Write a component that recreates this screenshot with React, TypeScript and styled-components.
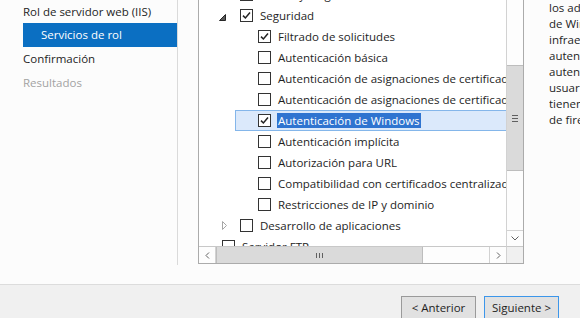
import React from 'react';
import styled, { createGlobalStyle } from 'styled-components';

const GlobalStyle = createGlobalStyle`
  html, body {
    margin: 0;
    padding: 0;
    background: #fcfcfc;
  }
  body {
    width: 580px;
    height: 318px;
    overflow: hidden;
    font-family: "Open Sans", "Noto Sans", sans-serif;
    font-size: 11.5px;
    color: #1e1e1e;
  }
`;

const Window = styled.div`
  width: 580px;
  height: 318px;
  display: flex;
  flex-direction: column;
  overflow: hidden;
  background: #fcfcfc;
`;

const Main = styled.div`
  display: flex;
  align-items: flex-start;
  height: 284px;
  overflow: hidden;
`;

const Nav = styled.nav`
  width: 178px;
  height: 265px;
  box-sizing: border-box;
  border-right: 1px solid #dadada;
  flex-shrink: 0;
  display: flex;
  flex-direction: column;
  padding-top: 1px;
`;

const NavItem = styled.div<{ $selected?: boolean; $disabled?: boolean; $first?: boolean }>`
  height: ${p => (p.$first ? 22 : 24)}px;
  line-height: ${p => (p.$first ? 22 : 24)}px;
  white-space: nowrap;
  margin-left: 23px;
  padding-left: ${p => (p.$selected ? 18 : 0)}px;
  background: ${p => (p.$selected ? '#0b6fc2' : 'transparent')};
  color: ${p => (p.$selected ? '#ffffff' : p.$disabled ? '#a3a3a3' : '#1e1e1e')};
`;

const Panel = styled.div`
  margin-left: 20px;
  width: 326px;
  height: 264px;
  box-sizing: border-box;
  border: 1px solid #ababab;
  border-top: none;
  background: #ffffff;
  flex-shrink: 0;
  display: grid;
  grid-template-columns: 307px 17px;
  grid-template-rows: 246px 17px;
`;

const Viewport = styled.div`
  overflow: hidden;
  position: relative;
`;

const TreeList = styled.div`
  margin-top: -16px;
  width: 420px;
  display: flex;
  flex-direction: column;
`;

const Row = styled.div<{ $level: number }>`
  height: 21px;
  display: flex;
  padding-left: ${p => p.$level * 18}px;
`;

const Item = styled.div<{ $selected?: boolean }>`
  flex: 1;
  height: 21px;
  box-sizing: border-box;
  display: flex;
  align-items: center;
  padding-left: 1px;
  border: 1px solid ${p => (p.$selected ? '#84b6ea' : 'transparent')};
  background: ${p => (p.$selected ? '#dbe9fb' : 'transparent')};
  white-space: nowrap;
`;

const Expander = styled.span`
  width: 21px;
  height: 19px;
  flex-shrink: 0;
  display: flex;
  align-items: flex-start;
`;

const ExpandedGlyph = styled.svg`
  margin-top: 8px;
  margin-left: 0;
`;

const CollapsedGlyph = styled.svg`
  margin-top: 5px;
  margin-left: 3px;
`;

const CheckBox = styled.span`
  width: 13px;
  height: 13px;
  box-sizing: border-box;
  border: 1px solid #333333;
  background: #ffffff;
  flex-shrink: 0;
  display: flex;
  align-items: center;
  justify-content: center;
`;

const Label = styled.span`
  margin-left: 7px;
  line-height: 19px;
  color: #1e1e1e;
`;

const Selection = styled.span`
  display: inline-block;
  line-height: 15px;
  padding: 0 1px;
  margin-left: -1px;
  background: #2f74d0;
  color: #ffffff;
`;

const VScroll = styled.div`
  box-sizing: border-box;
  border-left: 1px solid #d2d2d2;
  background: #fdfdfd;
  display: flex;
  flex-direction: column;
`;

const VThumb = styled.div`
  margin-top: 65px;
  height: 106px;
  box-sizing: border-box;
  border: 1px solid #bdbdbd;
  border-left: none;
  border-right: none;
  background: #dadada;
  display: flex;
  align-items: center;
  justify-content: center;
`;

const Track = styled.div`
  flex: 1;
`;

const ArrowButton = styled.div<{ $side: 'top' | 'left' | 'right' }>`
  box-sizing: border-box;
  display: flex;
  align-items: center;
  justify-content: center;
  flex-shrink: 0;
  width: ${p => (p.$side === 'top' ? 'auto' : '17px')};
  height: ${p => (p.$side === 'top' ? '16px' : 'auto')};
  border-top: ${p => (p.$side === 'top' ? '1px solid #d2d2d2' : 'none')};
  border-right: ${p => (p.$side === 'left' ? '1px solid #d2d2d2' : 'none')};
  border-left: ${p => (p.$side === 'right' ? '1px solid #d2d2d2' : 'none')};
`;

const HScroll = styled.div`
  box-sizing: border-box;
  border-top: 1px solid #c8c8c8;
  background: #fdfdfd;
  display: flex;
`;

const HThumb = styled.div`
  width: 207px;
  box-sizing: border-box;
  border: 1px solid #bdbdbd;
  border-top: none;
  border-bottom: none;
  background: #dadada;
  display: flex;
  align-items: center;
  justify-content: center;
`;

const Corner = styled.div`
  box-sizing: border-box;
  border-top: 1px solid #c8c8c8;
  border-left: 1px solid #d2d2d2;
  background: #f0f0f0;
`;

const Description = styled.div`
  margin-left: 25px;
  flex: 1;
  min-width: 0;
  overflow: hidden;
  white-space: nowrap;
  line-height: 16px;
  color: #1e1e1e;
`;

const Footer = styled.div`
  height: 34px;
  box-sizing: border-box;
  border-top: 1px solid #dcdcdc;
  background: #f0f0f0;
  display: flex;
  justify-content: flex-end;
  align-items: flex-start;
  gap: 8px;
  padding: 11px 21px 0 0;
`;

const Button = styled.button<{ $default?: boolean }>`
  width: 75px;
  height: 23px;
  box-sizing: border-box;
  margin: 0;
  padding: 0;
  font-family: inherit;
  font-size: 11.5px;
  color: #1e1e1e;
  background: #e1e1e1;
  border: 1px solid ${p => (p.$default ? '#3c96ea' : '#9a9a9a')};
  border-radius: 0;
`;

type TreeRow = {
  level: number;
  label: string;
  expander?: 'open' | 'closed';
  checked?: boolean;
  selected?: boolean;
};

const rows: TreeRow[] = [
  { level: 1, label: 'Estado y diagnóstico', expander: 'closed', checked: true },
  { level: 1, label: 'Seguridad', expander: 'open', checked: true },
  { level: 2, label: 'Filtrado de solicitudes', checked: true },
  { level: 2, label: 'Autenticación básica' },
  { level: 2, label: 'Autenticación de asignaciones de certificado de cliente' },
  { level: 2, label: 'Autenticación de asignaciones de certificado de cliente IIS' },
  { level: 2, label: 'Autenticación de Windows', checked: true, selected: true },
  { level: 2, label: 'Autenticación implícita' },
  { level: 2, label: 'Autorización para URL' },
  { level: 2, label: 'Compatibilidad con certificados centralizados SSL' },
  { level: 2, label: 'Restricciones de IP y dominio' },
  { level: 1, label: 'Desarrollo de aplicaciones', expander: 'closed' },
  { level: 0, label: 'Servidor FTP' },
];

const CheckMark = () => (
  <svg width="9" height="9" viewBox="0 0 9 9">
    <polyline points="1,4.6 3.4,7 8,1.6" fill="none" stroke="#222" strokeWidth="1.5" />
  </svg>
);

const Chevron = ({ dir }: { dir: 'left' | 'right' | 'down' }) => {
  if (dir === 'down') {
    return (
      <svg width="8" height="5" viewBox="0 0 8 5">
        <polyline points="0.5,0.5 4,4 7.5,0.5" fill="none" stroke="#606060" strokeWidth="1" />
      </svg>
    );
  }
  const pts = dir === 'left' ? '4,0.5 1,3.5 4,6.5' : '1,0.5 4,3.5 1,6.5';
  return (
    <svg width="5" height="7" viewBox="0 0 5 7">
      <polyline points={pts} fill="none" stroke="#606060" strokeWidth="1" />
    </svg>
  );
};

const TreeItem = ({ row }: { row: TreeRow }) => (
  <Row $level={row.level}>
    <Item $selected={row.selected}>
      <Expander>
        {row.expander === 'open' && (
          <ExpandedGlyph width="7" height="7" viewBox="0 0 7 7">
            <polygon points="6.5,0.5 6.5,6.5 0.5,6.5" fill="#595959" stroke="#262626" strokeWidth="1" />
          </ExpandedGlyph>
        )}
        {row.expander === 'closed' && (
          <CollapsedGlyph width="5" height="9" viewBox="0 0 5 9">
            <polygon points="0.5,0.5 4.5,4.5 0.5,8.5" fill="none" stroke="#a6a6a6" strokeWidth="1" />
          </CollapsedGlyph>
        )}
      </Expander>
      <CheckBox>{row.checked && <CheckMark />}</CheckBox>
      <Label>{row.selected ? <Selection>{row.label}</Selection> : row.label}</Label>
    </Item>
  </Row>
);

const descriptionLines = [
  'los administradores de un dominio',
  'de Windows aprovechar la',
  'infraestructura de Windows para la',
  'autenticación. No use la',
  'autenticación de Windows si los',
  'usuarios que tienen acceso al servidor',
  'tienen firewalls o servidores proxy',
  'de firewall entre ellos y el servidor.',
];

export default function App() {
  return (
    <>
      <GlobalStyle />
      <Window>
        <Main>
          <Nav>
            <NavItem $first>Rol de servidor web (IIS)</NavItem>
            <NavItem $selected>Servicios de rol</NavItem>
            <NavItem>Confirmación</NavItem>
            <NavItem $disabled>Resultados</NavItem>
          </Nav>
          <Panel>
            <Viewport>
              <TreeList>
                {rows.map((r, i) => (
                  <TreeItem key={i} row={r} />
                ))}
              </TreeList>
            </Viewport>
            <VScroll>
              <VThumb>
                <svg width="6" height="7" viewBox="0 0 6 7">
                  <path d="M0 0.5H6M0 3.5H6M0 6.5H6" stroke="#606060" strokeWidth="1" />
                </svg>
              </VThumb>
              <Track />
              <ArrowButton $side="top">
                <Chevron dir="down" />
              </ArrowButton>
            </VScroll>
            <HScroll>
              <ArrowButton $side="left">
                <Chevron dir="left" />
              </ArrowButton>
              <HThumb>
                <svg width="7" height="5" viewBox="0 0 7 5">
                  <path d="M0.5 0V5M3.5 0V5M6.5 0V5" stroke="#606060" strokeWidth="1" />
                </svg>
              </HThumb>
              <Track />
              <ArrowButton $side="right">
                <Chevron dir="right" />
              </ArrowButton>
            </HScroll>
            <Corner />
          </Panel>
          <Description>
            {descriptionLines.map((l, i) => (
              <div key={i}>{l}</div>
            ))}
          </Description>
        </Main>
        <Footer>
          <Button>&lt; Anterior</Button>
          <Button $default>Siguiente &gt;</Button>
        </Footer>
      </Window>
    </>
  );
}
